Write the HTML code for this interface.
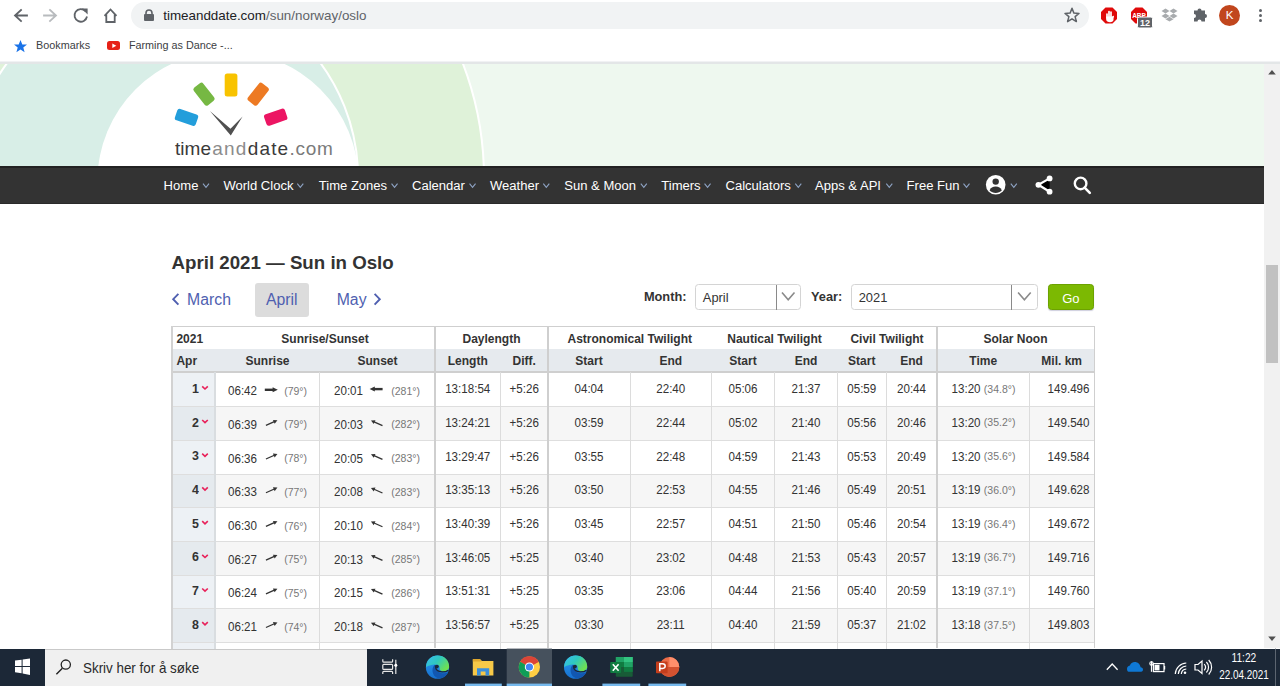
<!DOCTYPE html><html><head><meta charset="utf-8"><style>
*{margin:0;padding:0;box-sizing:border-box}
html,body{width:1280px;height:686px;overflow:hidden;background:#fff;position:relative;font-family:"Liberation Sans",sans-serif}
.t{position:absolute;white-space:pre;line-height:1;}
.r{position:absolute}
svg{position:absolute;overflow:visible}
</style></head><body>

<div class="r" style="left:0px;top:0px;width:1280px;height:62px;background:#ffffff;"></div>
<svg style="left:0;top:0" width="140" height="32"><g fill="none" stroke-width="1.8" stroke-linecap="square"><path d="M27 15.5H15.5M21 10L15 15.5L21 21" stroke="#5f6368"/><path d="M44 15.5H55.5M50 10L56 15.5L50 21" stroke="#b8bbbe"/></g><path d="M85.5 11.2A6.3 6.3 0 1 0 87 16.5" fill="none" stroke="#5f6368" stroke-width="1.8"/><path d="M81.6 8.6L87.6 8.6L87.6 14.6Z" fill="#5f6368"/><path d="M104.5 15.8L110.5 9.5L116.5 15.8M106.3 14.2V22H114.7V14.2" fill="none" stroke="#5f6368" stroke-width="1.8" stroke-linejoin="miter"/></svg>
<div class="r" style="left:131px;top:2px;width:958px;height:27px;background:#f1f3f4;border-radius:13.5px"></div>
<svg style="left:140;top:8px;left:140px" width="16" height="16"><path d="M6 6.5V5a3 3 0 0 1 6 0v1.5" fill="none" stroke="#5f6368" stroke-width="1.6"/><rect x="4" y="6" width="10" height="7" rx="1" fill="#5f6368"/></svg>
<div class="t" style="left:163.20px;top:8.80px;font-size:13.4px;color:#202124;font-weight:normal;">timeanddate.com</div>
<div class="t" style="left:265.99px;top:8.80px;font-size:13.4px;color:#5f6368">/sun/norway/oslo</div>
<svg style="left:1064px;top:7px" width="17" height="17"><path d="M8 1.3L9.9 6.1L15 6.4L11.1 9.6L12.4 14.6L8 11.8L3.6 14.6L4.9 9.6L1 6.4L6.1 6.1Z" fill="none" stroke="#5f6368" stroke-width="1.5" stroke-linejoin="round"/></svg>
<svg style="left:1100px;top:6px" width="19" height="19"><polygon points="5.5,1.5 12.5,1.5 17,6 17,13 12.5,17.5 5.5,17.5 1,13 1,6" fill="#e00a0a"/><g stroke="#fff" stroke-linecap="round" fill="none"><path d="M7 8V12M9 5.6V12M11 6V12" stroke-width="1.7"/><path d="M13.2 10.5L12.2 12.5" stroke-width="1.6"/></g><path d="M6.2 10.5H13.5V13.5C13.5 15.3 12 16.3 10 16.3C8 16.3 6.2 15.3 6.2 13.5Z" fill="#fff"/></svg>
<svg style="left:1130px;top:6px" width="24" height="24"><polygon points="5.5,1.5 12.5,1.5 17,6 17,13 12.5,17.5 5.5,17.5 1,13 1,6" fill="#e00a0a"/><text x="9" y="12.3" font-family="Liberation Sans" font-weight="bold" font-size="6.5" fill="#fff" text-anchor="middle">ABP</text><rect x="7.5" y="11" width="15" height="11" rx="1.5" fill="#5f6368" stroke="#fff" stroke-width="1"/><text x="15" y="20.3" font-family="Liberation Sans" font-weight="bold" font-size="9" fill="#fff" text-anchor="middle">12</text></svg>
<svg style="left:1161px;top:7px" width="18" height="17"><g fill="#a8abae"><path d="M4.5 1.5L8.5 4L4.5 6.5L0.5 4Z"/><path d="M12.5 1.5L16.5 4L12.5 6.5L8.5 4Z"/><path d="M4.5 6.5L8.5 9L4.5 11.5L0.5 9Z"/><path d="M12.5 6.5L16.5 9L12.5 11.5L8.5 9Z"/><path d="M4.5 12.2L8.5 9.8L12.5 12.2L8.5 14.6Z"/></g></svg>
<svg style="left:1191px;top:7px" width="18" height="17"><path d="M2 4.5H5.5A2 2 0 0 1 9.5 4.5H13V8A2 2 0 0 1 13 12V15.5H9.5A2 2 0 0 0 5.5 15.5H2V12A2 2 0 0 0 2 8Z" fill="#5f6368" transform="translate(1,-1)"/></svg>
<div class="r" style="left:1219px;top:4.5px;width:21px;height:21px;border-radius:50%;background:#c1461d"></div>
<div class="t" style="left:1225.66px;top:10.25px;font-size:11.5px;color:#fff;font-weight:normal;">K</div>
<div class="r" style="left:1258.5px;top:8.5px;width:3px;height:3px;border-radius:50%;background:#5f6368"></div>
<div class="r" style="left:1258.5px;top:13.5px;width:3px;height:3px;border-radius:50%;background:#5f6368"></div>
<div class="r" style="left:1258.5px;top:18.5px;width:3px;height:3px;border-radius:50%;background:#5f6368"></div>
<svg style="left:13px;top:39px" width="15" height="14"><path d="M7.5 1L9.3 5.5L14 5.6L10.3 8.6L11.6 13.2L7.5 10.5L3.4 13.2L4.7 8.6L1 5.6L5.7 5.5Z" fill="#1a73e8"/></svg>
<div class="t" style="left:36.10px;top:40.10px;font-size:10.8px;color:#3c4043;font-weight:normal;">Bookmarks</div>
<div class="r" style="left:106.5px;top:40.7px;width:13.6px;height:9.5px;border-radius:2.5px;background:#e62117"></div>
<svg style="left:106.5px;top:40.7px" width="14" height="10"><path d="M5.3 2.6L9.3 4.75L5.3 6.9Z" fill="#fff"/></svg>
<div class="t" style="left:128.90px;top:40.10px;font-size:10.8px;color:#3c4043;font-weight:normal;">Farming as Dance -...</div>
<svg style="left:0;top:63px" width="1264" height="103" viewBox="0 63 1264 103"><defs><clipPath id="hc"><rect x="0" y="63" width="1264" height="103"/></clipPath></defs><g clip-path="url(#hc)"><rect x="0" y="63" width="1264" height="103" fill="#eef8ef"/><circle cx="163" cy="178" r="321" fill="#dff2d9" stroke="#fff" stroke-width="2"/><circle cx="163.8" cy="178" r="194.3" fill="#d8eee7" stroke="#fff" stroke-width="2"/><circle cx="228" cy="181.6" r="130.6" fill="#fff"/></g><rect x="224.7" y="73.6" width="12.7" height="23" rx="2.5" fill="#f8c300"/><rect x="-6" y="-11.2" width="12" height="22.4" rx="2.5" fill="#76b843" transform="translate(204,94.2) rotate(-38)"/><rect x="-6" y="-11.2" width="12" height="22.4" rx="2.5" fill="#ed7a23" transform="translate(258.2,94.2) rotate(38)"/><rect x="-6" y="-11" width="12" height="22" rx="2.5" fill="#239edb" transform="translate(186.5,117.4) rotate(-71)"/><rect x="-6" y="-11" width="12" height="22" rx="2.5" fill="#ec1563" transform="translate(275.7,117.2) rotate(71)"/><path d="M209.9 110.9L230.8 135.5L242.6 116.5L230.5 128.8Z" fill="#505050"/></svg>
<div class="r" style="left:0px;top:61.2px;width:1280px;height:0.9px;background:#f1f2f4;"></div>
<div class="r" style="left:0px;top:62px;width:1280px;height:1.9px;background:#e3e6e7;"></div>
<div class="t" style="left:175.00px;top:138.70px;font-size:19px;color:#3a3a3a;font-weight:normal;letter-spacing:0.04px">time</div>
<div class="t" style="left:212.20px;top:138.70px;font-size:19px;color:#8c8c8c;font-weight:normal;letter-spacing:1.25px">and</div>
<div class="t" style="left:247.70px;top:138.70px;font-size:19px;color:#3a3a3a;font-weight:normal;letter-spacing:1.17px">date</div>
<div class="t" style="left:289.50px;top:138.70px;font-size:19px;color:#7a7a7a;font-weight:normal;letter-spacing:0.68px">.com</div>
<div class="r" style="left:0px;top:166.2px;width:1264px;height:37.3px;background:#333333;"></div>
<div class="r" style="left:0px;top:166.2px;width:1264px;height:1.6px;background:#222222;"></div>
<div class="r" style="left:0px;top:202.5px;width:1264px;height:1px;background:#2a2a2a;"></div>
<div class="t" style="left:163.60px;top:178.97px;font-size:13.05px;color:#ffffff;font-weight:normal;">Home</div>
<div class="t" style="left:223.40px;top:178.97px;font-size:13.05px;color:#ffffff;font-weight:normal;">World Clock</div>
<div class="t" style="left:318.75px;top:178.97px;font-size:13.05px;color:#ffffff;font-weight:normal;">Time Zones</div>
<div class="t" style="left:412.00px;top:178.97px;font-size:13.05px;color:#ffffff;font-weight:normal;">Calendar</div>
<div class="t" style="left:490.00px;top:178.97px;font-size:13.05px;color:#ffffff;font-weight:normal;">Weather</div>
<div class="t" style="left:564.25px;top:178.97px;font-size:13.05px;color:#ffffff;font-weight:normal;">Sun &amp; Moon</div>
<div class="t" style="left:661.25px;top:178.97px;font-size:13.05px;color:#ffffff;font-weight:normal;">Timers</div>
<div class="t" style="left:725.50px;top:178.97px;font-size:13.05px;color:#ffffff;font-weight:normal;">Calculators</div>
<div class="t" style="left:815.00px;top:178.97px;font-size:13.05px;color:#ffffff;font-weight:normal;">Apps &amp; API</div>
<div class="t" style="left:906.60px;top:178.97px;font-size:13.05px;color:#ffffff;font-weight:normal;">Free Fun</div>
<svg style="left:0;top:0" width="1280" height="686"><g fill="none" stroke="#8ea3c4" stroke-width="1.1"><path d="M203.00 183.7L206.00 187.3L209.00 183.7" /><path d="M297.30 183.7L300.30 187.3L303.30 183.7" /><path d="M391.55 183.7L394.55 187.3L397.55 183.7" /><path d="M469.55 183.7L472.55 187.3L475.55 183.7" /><path d="M543.30 183.7L546.30 187.3L549.30 183.7" /><path d="M640.80 183.7L643.80 187.3L646.80 183.7" /><path d="M704.55 183.7L707.55 187.3L710.55 183.7" /><path d="M795.30 183.7L798.30 187.3L801.30 183.7" /><path d="M886.30 183.7L889.30 187.3L892.30 183.7" /><path d="M963.50 183.7L966.50 187.3L969.50 183.7" /><path d="M1010.80 183.7L1013.80 187.3L1016.80 183.7" /></g><circle cx="995.7" cy="184.8" r="9.8" fill="#fff"/><circle cx="995.7" cy="181.6" r="3.2" fill="#333"/><path d="M989.6 190.6C990.6 187.6 992.8 186.6 995.7 186.6C998.6 186.6 1000.8 187.6 1001.8 190.6C1000.2 192.2 998 193 995.7 193C993.4 193 991.2 192.2 989.6 190.6Z" fill="#333"/><g stroke="#fff" stroke-width="2.2"><path d="M1049.6 178.4L1038.4 184.8L1049.6 191.7"/></g><g fill="#fff"><circle cx="1049.6" cy="178.4" r="2.9"/><circle cx="1038.4" cy="184.8" r="2.9"/><circle cx="1049.6" cy="191.7" r="2.9"/></g><circle cx="1080.6" cy="183.4" r="5.8" fill="none" stroke="#fff" stroke-width="2.4"/><path d="M1084.6 187.6L1089.8 192.8" stroke="#fff" stroke-width="2.6" stroke-linecap="round"/></svg>
<div class="t" style="left:171.50px;top:254.15px;font-size:18.7px;color:#333333;font-weight:bold;">April 2021 — Sun in Oslo</div>
<svg style="left:0;top:0" width="1280" height="686"><g fill="none" stroke="#4f5fb0" stroke-width="1.9"><path d="M178.4 293.8L173.2 299.2L178.4 304.6"/><path d="M374.6 293.8L379.8 299.2L374.6 304.6"/></g></svg>
<div class="t" style="left:187.10px;top:292.40px;font-size:15.8px;color:#4f5fb0;font-weight:normal;">March</div>
<div class="r" style="left:254.7px;top:282.7px;width:54.3px;height:34px;background:#dcdcdc;border-radius:3px"></div>
<div class="t" style="left:266.00px;top:292.40px;font-size:15.8px;color:#4f5fb0;font-weight:normal;">April</div>
<div class="t" style="left:336.70px;top:292.40px;font-size:15.8px;color:#4f5fb0;font-weight:normal;">May</div>
<div class="t" style="left:643.90px;top:290.60px;font-size:12.8px;color:#333;font-weight:bold;">Month:</div>
<div class="t" style="left:811.00px;top:290.60px;font-size:12.8px;color:#333;font-weight:bold;">Year:</div>
<div class="r" style="left:695.3px;top:284px;width:105.3px;height:26.4px;border:1px solid #d4d4d4;border-radius:3.5px;background:#fff"></div>
<div class="r" style="left:775.9px;top:285px;width:1px;height:24.6px;background:#8a8a8a;"></div>
<svg style="left:0;top:0" width="1280" height="686"><path d="M782.0 292.4L788.2 299.8L794.5 292.4" fill="none" stroke="#8a8a8a" stroke-width="1.6"/></svg>
<div class="t" style="left:702.80px;top:291.85px;font-size:12.9px;color:#333;font-weight:normal;">April</div>
<div class="r" style="left:851px;top:284px;width:186.8px;height:26.4px;border:1px solid #d4d4d4;border-radius:3.5px;background:#fff"></div>
<div class="r" style="left:1011px;top:285px;width:1px;height:24.6px;background:#8a8a8a;"></div>
<svg style="left:0;top:0" width="1280" height="686"><path d="M1018.1 292.4L1024.4 299.8L1030.7 292.4" fill="none" stroke="#8a8a8a" stroke-width="1.6"/></svg>
<div class="t" style="left:858.70px;top:291.85px;font-size:12.9px;color:#333;font-weight:normal;">2021</div>
<div class="r" style="left:1047.6px;top:284.2px;width:46px;height:26.2px;border-radius:3.5px;background:#7cb902;border:1px solid #6ca200;box-shadow:0 1px 1px rgba(60,60,120,.25)"></div>
<div class="t" style="left:1062.23px;top:292.00px;font-size:13px;color:#ffffff;font-weight:normal;">Go</div>
<div class="r" style="left:171.6px;top:326px;width:922.9px;height:23px;background:#ffffff;"></div>
<div class="r" style="left:171.6px;top:349px;width:922.9px;height:23px;background:#e6eaee;"></div>
<div class="r" style="left:171.6px;top:373.0px;width:922.9px;height:34.2px;background:#ffffff;"></div>
<div class="r" style="left:171.6px;top:373.0px;width:43.0px;height:34.2px;background:#edf1f5;"></div>
<div class="r" style="left:171.6px;top:406.7px;width:922.9px;height:34.2px;background:#f6f6f6;"></div>
<div class="r" style="left:171.6px;top:406.7px;width:43.0px;height:34.2px;background:#e5eaee;"></div>
<div class="r" style="left:171.6px;top:440.4px;width:922.9px;height:34.2px;background:#ffffff;"></div>
<div class="r" style="left:171.6px;top:440.4px;width:43.0px;height:34.2px;background:#edf1f5;"></div>
<div class="r" style="left:171.6px;top:474.1px;width:922.9px;height:34.2px;background:#f6f6f6;"></div>
<div class="r" style="left:171.6px;top:474.1px;width:43.0px;height:34.2px;background:#e5eaee;"></div>
<div class="r" style="left:171.6px;top:507.8px;width:922.9px;height:34.2px;background:#ffffff;"></div>
<div class="r" style="left:171.6px;top:507.8px;width:43.0px;height:34.2px;background:#edf1f5;"></div>
<div class="r" style="left:171.6px;top:541.5px;width:922.9px;height:34.2px;background:#f6f6f6;"></div>
<div class="r" style="left:171.6px;top:541.5px;width:43.0px;height:34.2px;background:#e5eaee;"></div>
<div class="r" style="left:171.6px;top:575.2px;width:922.9px;height:34.2px;background:#ffffff;"></div>
<div class="r" style="left:171.6px;top:575.2px;width:43.0px;height:34.2px;background:#edf1f5;"></div>
<div class="r" style="left:171.6px;top:608.9px;width:922.9px;height:34.2px;background:#f6f6f6;"></div>
<div class="r" style="left:171.6px;top:608.9px;width:43.0px;height:34.2px;background:#e5eaee;"></div>
<div class="r" style="left:171.6px;top:642.6px;width:922.9px;height:34.2px;background:#ffffff;"></div>
<div class="r" style="left:171.6px;top:642.6px;width:43.0px;height:34.2px;background:#edf1f5;"></div>
<div class="r" style="left:171.6px;top:406.2px;width:922.9px;height:1px;background:#dedede;"></div>
<div class="r" style="left:171.6px;top:439.9px;width:922.9px;height:1px;background:#dedede;"></div>
<div class="r" style="left:171.6px;top:473.6px;width:922.9px;height:1px;background:#dedede;"></div>
<div class="r" style="left:171.6px;top:507.3px;width:922.9px;height:1px;background:#dedede;"></div>
<div class="r" style="left:171.6px;top:541.0px;width:922.9px;height:1px;background:#dedede;"></div>
<div class="r" style="left:171.6px;top:574.7px;width:922.9px;height:1px;background:#dedede;"></div>
<div class="r" style="left:171.6px;top:608.4px;width:922.9px;height:1px;background:#dedede;"></div>
<div class="r" style="left:171.6px;top:642.1px;width:922.9px;height:1px;background:#dedede;"></div>
<div class="r" style="left:171.6px;top:325.6px;width:922.9px;height:1.2px;background:#cfcfcf;"></div>
<div class="r" style="left:171.6px;top:370.8px;width:922.9px;height:2px;background:#cfcfcf;"></div>
<div class="r" style="left:319.25px;top:372px;width:1.1px;height:276.5px;background:#dcdcdc;"></div>
<div class="r" style="left:500.0px;top:372px;width:1.1px;height:276.5px;background:#dcdcdc;"></div>
<div class="r" style="left:629.5px;top:372px;width:1.1px;height:276.5px;background:#dcdcdc;"></div>
<div class="r" style="left:711.0px;top:372px;width:1.1px;height:276.5px;background:#dcdcdc;"></div>
<div class="r" style="left:773.9px;top:372px;width:1.1px;height:276.5px;background:#dcdcdc;"></div>
<div class="r" style="left:837.0px;top:372px;width:1.1px;height:276.5px;background:#dcdcdc;"></div>
<div class="r" style="left:885.5px;top:372px;width:1.1px;height:276.5px;background:#dcdcdc;"></div>
<div class="r" style="left:1028.9px;top:372px;width:1.1px;height:276.5px;background:#dcdcdc;"></div>
<div class="r" style="left:214.1px;top:372px;width:1.8px;height:276.5px;background:#d9dde0;"></div>
<div class="r" style="left:433.75px;top:326px;width:2px;height:322px;background:#cfcfcf;"></div>
<div class="r" style="left:547px;top:326px;width:2px;height:322px;background:#cfcfcf;"></div>
<div class="r" style="left:935.9px;top:326px;width:2px;height:322px;background:#cfcfcf;"></div>
<div class="r" style="left:171.3px;top:326px;width:1.7px;height:322.5px;background:#d2d2d2;"></div>
<div class="r" style="left:1093.7px;top:326px;width:1.3px;height:322px;background:#cfcfcf;"></div>
<div class="t" style="left:176.40px;top:332.60px;font-size:12px;color:#333;font-weight:bold;">2021</div>
<div class="t" style="left:281.32px;top:332.60px;font-size:12px;color:#333;font-weight:bold;">Sunrise/Sunset</div>
<div class="t" style="left:462.50px;top:332.60px;font-size:12px;color:#333;font-weight:bold;">Daylength</div>
<div class="t" style="left:567.53px;top:332.60px;font-size:12px;color:#333;font-weight:bold;">Astronomical Twilight</div>
<div class="t" style="left:727.28px;top:332.60px;font-size:12px;color:#333;font-weight:bold;">Nautical Twilight</div>
<div class="t" style="left:850.45px;top:332.60px;font-size:12px;color:#333;font-weight:bold;">Civil Twilight</div>
<div class="t" style="left:983.50px;top:332.60px;font-size:12px;color:#333;font-weight:bold;">Solar Noon</div>
<div class="t" style="left:176.40px;top:354.60px;font-size:12px;color:#333;font-weight:bold;">Apr</div>
<div class="t" style="left:245.49px;top:354.60px;font-size:12px;color:#333;font-weight:bold;">Sunrise</div>
<div class="t" style="left:357.50px;top:354.60px;font-size:12px;color:#333;font-weight:bold;">Sunset</div>
<div class="t" style="left:447.75px;top:354.60px;font-size:12px;color:#333;font-weight:bold;">Length</div>
<div class="t" style="left:512.59px;top:354.60px;font-size:12px;color:#333;font-weight:bold;">Diff.</div>
<div class="t" style="left:575.33px;top:354.60px;font-size:12px;color:#333;font-weight:bold;">Start</div>
<div class="t" style="left:659.42px;top:354.60px;font-size:12px;color:#333;font-weight:bold;">End</div>
<div class="t" style="left:729.33px;top:354.60px;font-size:12px;color:#333;font-weight:bold;">Start</div>
<div class="t" style="left:794.67px;top:354.60px;font-size:12px;color:#333;font-weight:bold;">End</div>
<div class="t" style="left:848.08px;top:354.60px;font-size:12px;color:#333;font-weight:bold;">Start</div>
<div class="t" style="left:900.17px;top:354.60px;font-size:12px;color:#333;font-weight:bold;">End</div>
<div class="t" style="left:969.30px;top:354.60px;font-size:12px;color:#333;font-weight:bold;">Time</div>
<div class="t" style="left:1041.36px;top:354.60px;font-size:12px;color:#333;font-weight:bold;">Mil. km</div>
<div class="t" style="left:191.90px;top:382.80px;font-size:12.4px;color:#333;font-weight:bold;transform:scaleY(1.08);transform-origin:0 10.20px;">1</div>
<div class="t" style="left:228.00px;top:385.20px;font-size:11.6px;color:#333;font-weight:normal;transform:scaleY(1.17);transform-origin:0 9.80px;">06:42</div>
<div class="t" style="left:284.20px;top:385.75px;font-size:10.5px;color:#777;font-weight:normal;">(79°)</div>
<div class="t" style="left:334.00px;top:385.20px;font-size:11.6px;color:#333;font-weight:normal;transform:scaleY(1.17);transform-origin:0 9.80px;">20:01</div>
<div class="t" style="left:391.25px;top:385.75px;font-size:10.5px;color:#777;font-weight:normal;">(281°)</div>
<div class="t" style="left:445.17px;top:383.20px;font-size:11.6px;color:#333;font-weight:normal;transform:scaleY(1.17);transform-origin:0 9.80px;">13:18:54</div>
<div class="t" style="left:509.57px;top:383.20px;font-size:11.6px;color:#333;font-weight:normal;transform:scaleY(1.17);transform-origin:0 9.80px;">+5:26</div>
<div class="t" style="left:574.49px;top:383.20px;font-size:11.6px;color:#333;font-weight:normal;transform:scaleY(1.17);transform-origin:0 9.80px;">04:04</div>
<div class="t" style="left:656.24px;top:383.20px;font-size:11.6px;color:#333;font-weight:normal;transform:scaleY(1.17);transform-origin:0 9.80px;">22:40</div>
<div class="t" style="left:728.49px;top:383.20px;font-size:11.6px;color:#333;font-weight:normal;transform:scaleY(1.17);transform-origin:0 9.80px;">05:06</div>
<div class="t" style="left:791.49px;top:383.20px;font-size:11.6px;color:#333;font-weight:normal;transform:scaleY(1.17);transform-origin:0 9.80px;">21:37</div>
<div class="t" style="left:847.24px;top:383.20px;font-size:11.6px;color:#333;font-weight:normal;transform:scaleY(1.17);transform-origin:0 9.80px;">05:59</div>
<div class="t" style="left:896.99px;top:383.20px;font-size:11.6px;color:#333;font-weight:normal;transform:scaleY(1.17);transform-origin:0 9.80px;">20:44</div>
<div class="t" style="left:951.56px;top:383.20px;font-size:11.6px;color:#333;font-weight:normal;transform:scaleY(1.17);transform-origin:0 9.80px;">13:20</div>
<div class="t" style="left:983.81px;top:383.75px;font-size:10.5px;color:#777;font-weight:normal;">(34.8°)</div>
<div class="t" style="left:1047.57px;top:383.20px;font-size:11.6px;color:#333;font-weight:normal;transform:scaleY(1.17);transform-origin:0 9.80px;">149.496</div>
<div class="t" style="left:191.90px;top:416.50px;font-size:12.4px;color:#333;font-weight:bold;transform:scaleY(1.08);transform-origin:0 10.20px;">2</div>
<div class="t" style="left:228.00px;top:418.90px;font-size:11.6px;color:#333;font-weight:normal;transform:scaleY(1.17);transform-origin:0 9.80px;">06:39</div>
<div class="t" style="left:284.20px;top:419.45px;font-size:10.5px;color:#777;font-weight:normal;">(79°)</div>
<div class="t" style="left:334.00px;top:418.90px;font-size:11.6px;color:#333;font-weight:normal;transform:scaleY(1.17);transform-origin:0 9.80px;">20:03</div>
<div class="t" style="left:391.25px;top:419.45px;font-size:10.5px;color:#777;font-weight:normal;">(282°)</div>
<div class="t" style="left:445.17px;top:416.90px;font-size:11.6px;color:#333;font-weight:normal;transform:scaleY(1.17);transform-origin:0 9.80px;">13:24:21</div>
<div class="t" style="left:509.57px;top:416.90px;font-size:11.6px;color:#333;font-weight:normal;transform:scaleY(1.17);transform-origin:0 9.80px;">+5:26</div>
<div class="t" style="left:574.49px;top:416.90px;font-size:11.6px;color:#333;font-weight:normal;transform:scaleY(1.17);transform-origin:0 9.80px;">03:59</div>
<div class="t" style="left:656.24px;top:416.90px;font-size:11.6px;color:#333;font-weight:normal;transform:scaleY(1.17);transform-origin:0 9.80px;">22:44</div>
<div class="t" style="left:728.49px;top:416.90px;font-size:11.6px;color:#333;font-weight:normal;transform:scaleY(1.17);transform-origin:0 9.80px;">05:02</div>
<div class="t" style="left:791.49px;top:416.90px;font-size:11.6px;color:#333;font-weight:normal;transform:scaleY(1.17);transform-origin:0 9.80px;">21:40</div>
<div class="t" style="left:847.24px;top:416.90px;font-size:11.6px;color:#333;font-weight:normal;transform:scaleY(1.17);transform-origin:0 9.80px;">05:56</div>
<div class="t" style="left:896.99px;top:416.90px;font-size:11.6px;color:#333;font-weight:normal;transform:scaleY(1.17);transform-origin:0 9.80px;">20:46</div>
<div class="t" style="left:951.56px;top:416.90px;font-size:11.6px;color:#333;font-weight:normal;transform:scaleY(1.17);transform-origin:0 9.80px;">13:20</div>
<div class="t" style="left:983.81px;top:417.45px;font-size:10.5px;color:#777;font-weight:normal;">(35.2°)</div>
<div class="t" style="left:1047.57px;top:416.90px;font-size:11.6px;color:#333;font-weight:normal;transform:scaleY(1.17);transform-origin:0 9.80px;">149.540</div>
<div class="t" style="left:191.90px;top:450.20px;font-size:12.4px;color:#333;font-weight:bold;transform:scaleY(1.08);transform-origin:0 10.20px;">3</div>
<div class="t" style="left:228.00px;top:452.60px;font-size:11.6px;color:#333;font-weight:normal;transform:scaleY(1.17);transform-origin:0 9.80px;">06:36</div>
<div class="t" style="left:284.20px;top:453.15px;font-size:10.5px;color:#777;font-weight:normal;">(78°)</div>
<div class="t" style="left:334.00px;top:452.60px;font-size:11.6px;color:#333;font-weight:normal;transform:scaleY(1.17);transform-origin:0 9.80px;">20:05</div>
<div class="t" style="left:391.25px;top:453.15px;font-size:10.5px;color:#777;font-weight:normal;">(283°)</div>
<div class="t" style="left:445.17px;top:450.60px;font-size:11.6px;color:#333;font-weight:normal;transform:scaleY(1.17);transform-origin:0 9.80px;">13:29:47</div>
<div class="t" style="left:509.57px;top:450.60px;font-size:11.6px;color:#333;font-weight:normal;transform:scaleY(1.17);transform-origin:0 9.80px;">+5:26</div>
<div class="t" style="left:574.49px;top:450.60px;font-size:11.6px;color:#333;font-weight:normal;transform:scaleY(1.17);transform-origin:0 9.80px;">03:55</div>
<div class="t" style="left:656.24px;top:450.60px;font-size:11.6px;color:#333;font-weight:normal;transform:scaleY(1.17);transform-origin:0 9.80px;">22:48</div>
<div class="t" style="left:728.49px;top:450.60px;font-size:11.6px;color:#333;font-weight:normal;transform:scaleY(1.17);transform-origin:0 9.80px;">04:59</div>
<div class="t" style="left:791.49px;top:450.60px;font-size:11.6px;color:#333;font-weight:normal;transform:scaleY(1.17);transform-origin:0 9.80px;">21:43</div>
<div class="t" style="left:847.24px;top:450.60px;font-size:11.6px;color:#333;font-weight:normal;transform:scaleY(1.17);transform-origin:0 9.80px;">05:53</div>
<div class="t" style="left:896.99px;top:450.60px;font-size:11.6px;color:#333;font-weight:normal;transform:scaleY(1.17);transform-origin:0 9.80px;">20:49</div>
<div class="t" style="left:951.56px;top:450.60px;font-size:11.6px;color:#333;font-weight:normal;transform:scaleY(1.17);transform-origin:0 9.80px;">13:20</div>
<div class="t" style="left:983.81px;top:451.15px;font-size:10.5px;color:#777;font-weight:normal;">(35.6°)</div>
<div class="t" style="left:1047.57px;top:450.60px;font-size:11.6px;color:#333;font-weight:normal;transform:scaleY(1.17);transform-origin:0 9.80px;">149.584</div>
<div class="t" style="left:191.90px;top:483.90px;font-size:12.4px;color:#333;font-weight:bold;transform:scaleY(1.08);transform-origin:0 10.20px;">4</div>
<div class="t" style="left:228.00px;top:486.30px;font-size:11.6px;color:#333;font-weight:normal;transform:scaleY(1.17);transform-origin:0 9.80px;">06:33</div>
<div class="t" style="left:284.20px;top:486.85px;font-size:10.5px;color:#777;font-weight:normal;">(77°)</div>
<div class="t" style="left:334.00px;top:486.30px;font-size:11.6px;color:#333;font-weight:normal;transform:scaleY(1.17);transform-origin:0 9.80px;">20:08</div>
<div class="t" style="left:391.25px;top:486.85px;font-size:10.5px;color:#777;font-weight:normal;">(283°)</div>
<div class="t" style="left:445.17px;top:484.30px;font-size:11.6px;color:#333;font-weight:normal;transform:scaleY(1.17);transform-origin:0 9.80px;">13:35:13</div>
<div class="t" style="left:509.57px;top:484.30px;font-size:11.6px;color:#333;font-weight:normal;transform:scaleY(1.17);transform-origin:0 9.80px;">+5:26</div>
<div class="t" style="left:574.49px;top:484.30px;font-size:11.6px;color:#333;font-weight:normal;transform:scaleY(1.17);transform-origin:0 9.80px;">03:50</div>
<div class="t" style="left:656.24px;top:484.30px;font-size:11.6px;color:#333;font-weight:normal;transform:scaleY(1.17);transform-origin:0 9.80px;">22:53</div>
<div class="t" style="left:728.49px;top:484.30px;font-size:11.6px;color:#333;font-weight:normal;transform:scaleY(1.17);transform-origin:0 9.80px;">04:55</div>
<div class="t" style="left:791.49px;top:484.30px;font-size:11.6px;color:#333;font-weight:normal;transform:scaleY(1.17);transform-origin:0 9.80px;">21:46</div>
<div class="t" style="left:847.24px;top:484.30px;font-size:11.6px;color:#333;font-weight:normal;transform:scaleY(1.17);transform-origin:0 9.80px;">05:49</div>
<div class="t" style="left:896.99px;top:484.30px;font-size:11.6px;color:#333;font-weight:normal;transform:scaleY(1.17);transform-origin:0 9.80px;">20:51</div>
<div class="t" style="left:951.56px;top:484.30px;font-size:11.6px;color:#333;font-weight:normal;transform:scaleY(1.17);transform-origin:0 9.80px;">13:19</div>
<div class="t" style="left:983.81px;top:484.85px;font-size:10.5px;color:#777;font-weight:normal;">(36.0°)</div>
<div class="t" style="left:1047.57px;top:484.30px;font-size:11.6px;color:#333;font-weight:normal;transform:scaleY(1.17);transform-origin:0 9.80px;">149.628</div>
<div class="t" style="left:191.90px;top:517.60px;font-size:12.4px;color:#333;font-weight:bold;transform:scaleY(1.08);transform-origin:0 10.20px;">5</div>
<div class="t" style="left:228.00px;top:520.00px;font-size:11.6px;color:#333;font-weight:normal;transform:scaleY(1.17);transform-origin:0 9.80px;">06:30</div>
<div class="t" style="left:284.20px;top:520.55px;font-size:10.5px;color:#777;font-weight:normal;">(76°)</div>
<div class="t" style="left:334.00px;top:520.00px;font-size:11.6px;color:#333;font-weight:normal;transform:scaleY(1.17);transform-origin:0 9.80px;">20:10</div>
<div class="t" style="left:391.25px;top:520.55px;font-size:10.5px;color:#777;font-weight:normal;">(284°)</div>
<div class="t" style="left:445.17px;top:518.00px;font-size:11.6px;color:#333;font-weight:normal;transform:scaleY(1.17);transform-origin:0 9.80px;">13:40:39</div>
<div class="t" style="left:509.57px;top:518.00px;font-size:11.6px;color:#333;font-weight:normal;transform:scaleY(1.17);transform-origin:0 9.80px;">+5:26</div>
<div class="t" style="left:574.49px;top:518.00px;font-size:11.6px;color:#333;font-weight:normal;transform:scaleY(1.17);transform-origin:0 9.80px;">03:45</div>
<div class="t" style="left:656.24px;top:518.00px;font-size:11.6px;color:#333;font-weight:normal;transform:scaleY(1.17);transform-origin:0 9.80px;">22:57</div>
<div class="t" style="left:728.49px;top:518.00px;font-size:11.6px;color:#333;font-weight:normal;transform:scaleY(1.17);transform-origin:0 9.80px;">04:51</div>
<div class="t" style="left:791.49px;top:518.00px;font-size:11.6px;color:#333;font-weight:normal;transform:scaleY(1.17);transform-origin:0 9.80px;">21:50</div>
<div class="t" style="left:847.24px;top:518.00px;font-size:11.6px;color:#333;font-weight:normal;transform:scaleY(1.17);transform-origin:0 9.80px;">05:46</div>
<div class="t" style="left:896.99px;top:518.00px;font-size:11.6px;color:#333;font-weight:normal;transform:scaleY(1.17);transform-origin:0 9.80px;">20:54</div>
<div class="t" style="left:951.56px;top:518.00px;font-size:11.6px;color:#333;font-weight:normal;transform:scaleY(1.17);transform-origin:0 9.80px;">13:19</div>
<div class="t" style="left:983.81px;top:518.55px;font-size:10.5px;color:#777;font-weight:normal;">(36.4°)</div>
<div class="t" style="left:1047.57px;top:518.00px;font-size:11.6px;color:#333;font-weight:normal;transform:scaleY(1.17);transform-origin:0 9.80px;">149.672</div>
<div class="t" style="left:191.90px;top:551.30px;font-size:12.4px;color:#333;font-weight:bold;transform:scaleY(1.08);transform-origin:0 10.20px;">6</div>
<div class="t" style="left:228.00px;top:553.70px;font-size:11.6px;color:#333;font-weight:normal;transform:scaleY(1.17);transform-origin:0 9.80px;">06:27</div>
<div class="t" style="left:284.20px;top:554.25px;font-size:10.5px;color:#777;font-weight:normal;">(75°)</div>
<div class="t" style="left:334.00px;top:553.70px;font-size:11.6px;color:#333;font-weight:normal;transform:scaleY(1.17);transform-origin:0 9.80px;">20:13</div>
<div class="t" style="left:391.25px;top:554.25px;font-size:10.5px;color:#777;font-weight:normal;">(285°)</div>
<div class="t" style="left:445.17px;top:551.70px;font-size:11.6px;color:#333;font-weight:normal;transform:scaleY(1.17);transform-origin:0 9.80px;">13:46:05</div>
<div class="t" style="left:509.57px;top:551.70px;font-size:11.6px;color:#333;font-weight:normal;transform:scaleY(1.17);transform-origin:0 9.80px;">+5:25</div>
<div class="t" style="left:574.49px;top:551.70px;font-size:11.6px;color:#333;font-weight:normal;transform:scaleY(1.17);transform-origin:0 9.80px;">03:40</div>
<div class="t" style="left:656.24px;top:551.70px;font-size:11.6px;color:#333;font-weight:normal;transform:scaleY(1.17);transform-origin:0 9.80px;">23:02</div>
<div class="t" style="left:728.49px;top:551.70px;font-size:11.6px;color:#333;font-weight:normal;transform:scaleY(1.17);transform-origin:0 9.80px;">04:48</div>
<div class="t" style="left:791.49px;top:551.70px;font-size:11.6px;color:#333;font-weight:normal;transform:scaleY(1.17);transform-origin:0 9.80px;">21:53</div>
<div class="t" style="left:847.24px;top:551.70px;font-size:11.6px;color:#333;font-weight:normal;transform:scaleY(1.17);transform-origin:0 9.80px;">05:43</div>
<div class="t" style="left:896.99px;top:551.70px;font-size:11.6px;color:#333;font-weight:normal;transform:scaleY(1.17);transform-origin:0 9.80px;">20:57</div>
<div class="t" style="left:951.56px;top:551.70px;font-size:11.6px;color:#333;font-weight:normal;transform:scaleY(1.17);transform-origin:0 9.80px;">13:19</div>
<div class="t" style="left:983.81px;top:552.25px;font-size:10.5px;color:#777;font-weight:normal;">(36.7°)</div>
<div class="t" style="left:1047.57px;top:551.70px;font-size:11.6px;color:#333;font-weight:normal;transform:scaleY(1.17);transform-origin:0 9.80px;">149.716</div>
<div class="t" style="left:191.90px;top:585.00px;font-size:12.4px;color:#333;font-weight:bold;transform:scaleY(1.08);transform-origin:0 10.20px;">7</div>
<div class="t" style="left:228.00px;top:587.40px;font-size:11.6px;color:#333;font-weight:normal;transform:scaleY(1.17);transform-origin:0 9.80px;">06:24</div>
<div class="t" style="left:284.20px;top:587.95px;font-size:10.5px;color:#777;font-weight:normal;">(75°)</div>
<div class="t" style="left:334.00px;top:587.40px;font-size:11.6px;color:#333;font-weight:normal;transform:scaleY(1.17);transform-origin:0 9.80px;">20:15</div>
<div class="t" style="left:391.25px;top:587.95px;font-size:10.5px;color:#777;font-weight:normal;">(286°)</div>
<div class="t" style="left:445.17px;top:585.40px;font-size:11.6px;color:#333;font-weight:normal;transform:scaleY(1.17);transform-origin:0 9.80px;">13:51:31</div>
<div class="t" style="left:509.57px;top:585.40px;font-size:11.6px;color:#333;font-weight:normal;transform:scaleY(1.17);transform-origin:0 9.80px;">+5:25</div>
<div class="t" style="left:574.49px;top:585.40px;font-size:11.6px;color:#333;font-weight:normal;transform:scaleY(1.17);transform-origin:0 9.80px;">03:35</div>
<div class="t" style="left:656.24px;top:585.40px;font-size:11.6px;color:#333;font-weight:normal;transform:scaleY(1.17);transform-origin:0 9.80px;">23:06</div>
<div class="t" style="left:728.49px;top:585.40px;font-size:11.6px;color:#333;font-weight:normal;transform:scaleY(1.17);transform-origin:0 9.80px;">04:44</div>
<div class="t" style="left:791.49px;top:585.40px;font-size:11.6px;color:#333;font-weight:normal;transform:scaleY(1.17);transform-origin:0 9.80px;">21:56</div>
<div class="t" style="left:847.24px;top:585.40px;font-size:11.6px;color:#333;font-weight:normal;transform:scaleY(1.17);transform-origin:0 9.80px;">05:40</div>
<div class="t" style="left:896.99px;top:585.40px;font-size:11.6px;color:#333;font-weight:normal;transform:scaleY(1.17);transform-origin:0 9.80px;">20:59</div>
<div class="t" style="left:951.56px;top:585.40px;font-size:11.6px;color:#333;font-weight:normal;transform:scaleY(1.17);transform-origin:0 9.80px;">13:19</div>
<div class="t" style="left:983.81px;top:585.95px;font-size:10.5px;color:#777;font-weight:normal;">(37.1°)</div>
<div class="t" style="left:1047.57px;top:585.40px;font-size:11.6px;color:#333;font-weight:normal;transform:scaleY(1.17);transform-origin:0 9.80px;">149.760</div>
<div class="t" style="left:191.90px;top:618.70px;font-size:12.4px;color:#333;font-weight:bold;transform:scaleY(1.08);transform-origin:0 10.20px;">8</div>
<div class="t" style="left:228.00px;top:621.10px;font-size:11.6px;color:#333;font-weight:normal;transform:scaleY(1.17);transform-origin:0 9.80px;">06:21</div>
<div class="t" style="left:284.20px;top:621.65px;font-size:10.5px;color:#777;font-weight:normal;">(74°)</div>
<div class="t" style="left:334.00px;top:621.10px;font-size:11.6px;color:#333;font-weight:normal;transform:scaleY(1.17);transform-origin:0 9.80px;">20:18</div>
<div class="t" style="left:391.25px;top:621.65px;font-size:10.5px;color:#777;font-weight:normal;">(287°)</div>
<div class="t" style="left:445.17px;top:619.10px;font-size:11.6px;color:#333;font-weight:normal;transform:scaleY(1.17);transform-origin:0 9.80px;">13:56:57</div>
<div class="t" style="left:509.57px;top:619.10px;font-size:11.6px;color:#333;font-weight:normal;transform:scaleY(1.17);transform-origin:0 9.80px;">+5:25</div>
<div class="t" style="left:574.49px;top:619.10px;font-size:11.6px;color:#333;font-weight:normal;transform:scaleY(1.17);transform-origin:0 9.80px;">03:30</div>
<div class="t" style="left:656.67px;top:619.10px;font-size:11.6px;color:#333;font-weight:normal;transform:scaleY(1.17);transform-origin:0 9.80px;">23:11</div>
<div class="t" style="left:728.49px;top:619.10px;font-size:11.6px;color:#333;font-weight:normal;transform:scaleY(1.17);transform-origin:0 9.80px;">04:40</div>
<div class="t" style="left:791.49px;top:619.10px;font-size:11.6px;color:#333;font-weight:normal;transform:scaleY(1.17);transform-origin:0 9.80px;">21:59</div>
<div class="t" style="left:847.24px;top:619.10px;font-size:11.6px;color:#333;font-weight:normal;transform:scaleY(1.17);transform-origin:0 9.80px;">05:37</div>
<div class="t" style="left:896.99px;top:619.10px;font-size:11.6px;color:#333;font-weight:normal;transform:scaleY(1.17);transform-origin:0 9.80px;">21:02</div>
<div class="t" style="left:951.56px;top:619.10px;font-size:11.6px;color:#333;font-weight:normal;transform:scaleY(1.17);transform-origin:0 9.80px;">13:18</div>
<div class="t" style="left:983.81px;top:619.65px;font-size:10.5px;color:#777;font-weight:normal;">(37.5°)</div>
<div class="t" style="left:1047.57px;top:619.10px;font-size:11.6px;color:#333;font-weight:normal;transform:scaleY(1.17);transform-origin:0 9.80px;">149.803</div>
<div class="t" style="left:191.90px;top:652.40px;font-size:12.4px;color:#333;font-weight:bold;transform:scaleY(1.08);transform-origin:0 10.20px;">9</div>
<div class="t" style="left:228.00px;top:654.80px;font-size:11.6px;color:#333;font-weight:normal;transform:scaleY(1.17);transform-origin:0 9.80px;">06:18</div>
<div class="t" style="left:284.20px;top:655.35px;font-size:10.5px;color:#777;font-weight:normal;">(73°)</div>
<div class="t" style="left:334.00px;top:654.80px;font-size:11.6px;color:#333;font-weight:normal;transform:scaleY(1.17);transform-origin:0 9.80px;">20:20</div>
<div class="t" style="left:391.25px;top:655.35px;font-size:10.5px;color:#777;font-weight:normal;">(288°)</div>
<div class="t" style="left:445.17px;top:652.80px;font-size:11.6px;color:#333;font-weight:normal;transform:scaleY(1.17);transform-origin:0 9.80px;">14:02:23</div>
<div class="t" style="left:509.57px;top:652.80px;font-size:11.6px;color:#333;font-weight:normal;transform:scaleY(1.17);transform-origin:0 9.80px;">+5:25</div>
<div class="t" style="left:574.49px;top:652.80px;font-size:11.6px;color:#333;font-weight:normal;transform:scaleY(1.17);transform-origin:0 9.80px;">03:25</div>
<div class="t" style="left:656.24px;top:652.80px;font-size:11.6px;color:#333;font-weight:normal;transform:scaleY(1.17);transform-origin:0 9.80px;">23:15</div>
<div class="t" style="left:728.49px;top:652.80px;font-size:11.6px;color:#333;font-weight:normal;transform:scaleY(1.17);transform-origin:0 9.80px;">04:36</div>
<div class="t" style="left:791.49px;top:652.80px;font-size:11.6px;color:#333;font-weight:normal;transform:scaleY(1.17);transform-origin:0 9.80px;">22:02</div>
<div class="t" style="left:847.24px;top:652.80px;font-size:11.6px;color:#333;font-weight:normal;transform:scaleY(1.17);transform-origin:0 9.80px;">05:34</div>
<div class="t" style="left:896.99px;top:652.80px;font-size:11.6px;color:#333;font-weight:normal;transform:scaleY(1.17);transform-origin:0 9.80px;">21:05</div>
<div class="t" style="left:951.56px;top:652.80px;font-size:11.6px;color:#333;font-weight:normal;transform:scaleY(1.17);transform-origin:0 9.80px;">13:18</div>
<div class="t" style="left:983.81px;top:653.35px;font-size:10.5px;color:#777;font-weight:normal;">(37.9°)</div>
<div class="t" style="left:1047.57px;top:652.80px;font-size:11.6px;color:#333;font-weight:normal;transform:scaleY(1.17);transform-origin:0 9.80px;">149.846</div>
<svg style="left:0;top:0" width="1280" height="686"><path d="M202.2 386.30L205 389.00L207.8 386.30" fill="none" stroke="#e8215a" stroke-width="1.6"/><path d="M264.8 389.80H273.5" stroke="#333" stroke-width="2.4"/><path d="M272.6 387.30L277.8 389.80L272.6 392.30Z" fill="#333"/><path d="M382.6 389.10H373.9" stroke="#333" stroke-width="2.4"/><path d="M374.8 386.60L369.6 389.10L374.8 391.60Z" fill="#333"/><path d="M202.2 420.00L205 422.70L207.8 420.00" fill="none" stroke="#e8215a" stroke-width="1.6"/><g transform="translate(271.6,422.80) rotate(-24)"><path d="M-6.2 0H3" stroke="#333" stroke-width="1.3"/><path d="M2.4 -2.1L6.4 0L2.4 2.1Z" fill="#333"/></g><g transform="translate(376.8,423.10) rotate(24)"><path d="M6.2 0H-3" stroke="#333" stroke-width="1.3"/><path d="M-2.4 -2.1L-6.4 0L-2.4 2.1Z" fill="#333"/></g><path d="M202.2 453.70L205 456.40L207.8 453.70" fill="none" stroke="#e8215a" stroke-width="1.6"/><g transform="translate(271.6,456.50) rotate(-24)"><path d="M-6.2 0H3" stroke="#333" stroke-width="1.3"/><path d="M2.4 -2.1L6.4 0L2.4 2.1Z" fill="#333"/></g><g transform="translate(376.8,456.80) rotate(24)"><path d="M6.2 0H-3" stroke="#333" stroke-width="1.3"/><path d="M-2.4 -2.1L-6.4 0L-2.4 2.1Z" fill="#333"/></g><path d="M202.2 487.40L205 490.10L207.8 487.40" fill="none" stroke="#e8215a" stroke-width="1.6"/><g transform="translate(271.6,490.20) rotate(-24)"><path d="M-6.2 0H3" stroke="#333" stroke-width="1.3"/><path d="M2.4 -2.1L6.4 0L2.4 2.1Z" fill="#333"/></g><g transform="translate(376.8,490.50) rotate(24)"><path d="M6.2 0H-3" stroke="#333" stroke-width="1.3"/><path d="M-2.4 -2.1L-6.4 0L-2.4 2.1Z" fill="#333"/></g><path d="M202.2 521.10L205 523.80L207.8 521.10" fill="none" stroke="#e8215a" stroke-width="1.6"/><g transform="translate(271.6,523.90) rotate(-24)"><path d="M-6.2 0H3" stroke="#333" stroke-width="1.3"/><path d="M2.4 -2.1L6.4 0L2.4 2.1Z" fill="#333"/></g><g transform="translate(376.8,524.20) rotate(24)"><path d="M6.2 0H-3" stroke="#333" stroke-width="1.3"/><path d="M-2.4 -2.1L-6.4 0L-2.4 2.1Z" fill="#333"/></g><path d="M202.2 554.80L205 557.50L207.8 554.80" fill="none" stroke="#e8215a" stroke-width="1.6"/><g transform="translate(271.6,557.60) rotate(-24)"><path d="M-6.2 0H3" stroke="#333" stroke-width="1.3"/><path d="M2.4 -2.1L6.4 0L2.4 2.1Z" fill="#333"/></g><g transform="translate(376.8,557.90) rotate(24)"><path d="M6.2 0H-3" stroke="#333" stroke-width="1.3"/><path d="M-2.4 -2.1L-6.4 0L-2.4 2.1Z" fill="#333"/></g><path d="M202.2 588.50L205 591.20L207.8 588.50" fill="none" stroke="#e8215a" stroke-width="1.6"/><g transform="translate(271.6,591.30) rotate(-24)"><path d="M-6.2 0H3" stroke="#333" stroke-width="1.3"/><path d="M2.4 -2.1L6.4 0L2.4 2.1Z" fill="#333"/></g><g transform="translate(376.8,591.60) rotate(24)"><path d="M6.2 0H-3" stroke="#333" stroke-width="1.3"/><path d="M-2.4 -2.1L-6.4 0L-2.4 2.1Z" fill="#333"/></g><path d="M202.2 622.20L205 624.90L207.8 622.20" fill="none" stroke="#e8215a" stroke-width="1.6"/><g transform="translate(271.6,625.00) rotate(-24)"><path d="M-6.2 0H3" stroke="#333" stroke-width="1.3"/><path d="M2.4 -2.1L6.4 0L2.4 2.1Z" fill="#333"/></g><g transform="translate(376.8,625.30) rotate(24)"><path d="M6.2 0H-3" stroke="#333" stroke-width="1.3"/><path d="M-2.4 -2.1L-6.4 0L-2.4 2.1Z" fill="#333"/></g><path d="M202.2 655.90L205 658.60L207.8 655.90" fill="none" stroke="#e8215a" stroke-width="1.6"/><g transform="translate(271.6,658.70) rotate(-24)"><path d="M-6.2 0H3" stroke="#333" stroke-width="1.3"/><path d="M2.4 -2.1L6.4 0L2.4 2.1Z" fill="#333"/></g><g transform="translate(376.8,659.00) rotate(24)"><path d="M6.2 0H-3" stroke="#333" stroke-width="1.3"/><path d="M-2.4 -2.1L-6.4 0L-2.4 2.1Z" fill="#333"/></g></svg>
<div class="r" style="left:1264px;top:63.9px;width:16px;height:584.1px;background:#f1f1f1;"></div>
<div class="r" style="left:1265.8px;top:265px;width:12.5px;height:97.8px;background:#c1c1c1;"></div>
<svg style="left:1264px;top:63px" width="16" height="585"><path d="M4.2 11.4L8 7L11.8 11.4Z" fill="#505050"/><path d="M4.2 573.6L8 578L11.8 573.6Z" fill="#505050"/></svg>
<div class="r" style="left:0px;top:648.6px;width:1280px;height:37.4px;background:#1c2837;"></div>
<div class="r" style="left:45px;top:648.6px;width:322.4px;height:37.4px;background:#f0f0f0;"></div>
<div class="r" style="left:45px;top:648.6px;width:322.4px;height:1.2px;background:#c9c9c9;"></div>
<svg style="left:0;top:648px" width="1280" height="38"><path d="M15 12.6L21.6 11.7V17.9H15Z M22.6 11.5L30 10.5V17.9H22.6Z M15 18.9H21.6V25.2L15 24.2Z M22.6 18.9H30V27L22.6 25.4Z" fill="#fff"/><circle cx="65.8" cy="16.6" r="4.6" fill="none" stroke="#222" stroke-width="1.3"/><path d="M62.4 20.2L56.4 26.3" stroke="#222" stroke-width="1.4"/><g fill="none" stroke="#e6e6e6" stroke-width="1.2"><path d="M382.8 11.3V13.2Q382.8 14.2 383.8 14.2H391.6Q392.6 14.2 392.6 13.2V11.3"/><rect x="382.8" y="16.4" width="9.8" height="5" rx="0.9"/><path d="M382.8 26V24.2Q382.8 23.3 383.8 23.3H391.6Q392.6 23.3 392.6 24.2V26"/><path d="M395.8 11.8V26"/></g><circle cx="395.8" cy="17.2" r="1.5" fill="#fff"/><defs><linearGradient id="eg" x1="0" y1="0" x2="1" y2="0.6"><stop offset="0" stop-color="#3cbcf2"/><stop offset=".5" stop-color="#2ec8c0"/><stop offset="1" stop-color="#6ee052"/></linearGradient><linearGradient id="eb" x1="0" y1="0" x2="0" y2="1"><stop offset="0" stop-color="#2a9cf0"/><stop offset="1" stop-color="#1670d0"/></linearGradient></defs><g id="edge1"><circle cx="437.5" cy="19.2" r="11.6" fill="url(#eb)"/><path d="M426 19C426.5 11.5 431.5 7.6 437.5 7.6C444.5 7.6 449.1 12.5 449.1 18.5C449.1 21.8 446.5 23.2 443.5 23.2C440.8 23.2 439.2 21.8 439.6 19.7C439.9 17.8 438.5 16.4 436.2 16.4C431.5 16.4 427.5 18 426 19Z" fill="url(#eg)"/><path d="M434.2 17.2C431.2 21 432.2 27.5 437 29.8C441.5 31.5 446 29 448 24.6C445.5 25.6 441 25.8 438.4 23.8C436.3 22.2 435.6 19.6 436 17.2Z" fill="#1257b0"/><path d="M435.3 17.6C435.4 21.4 438 23.9 442.2 23.9C445 23.9 447.2 23.2 448.4 22.2" fill="none" stroke="#1c2837" stroke-width="1.2"/><circle cx="437" cy="18.6" r="1.8" fill="#1c2837"/></g><use href="#edge1" x="138.1"/><path d="M472.8 11.5H480.5L482 13H493.4V27.4H472.8Z" fill="#f7c948"/><path d="M472.8 11H480L481.5 13.5H472.8Z" fill="#e0a82e"/><path d="M477 27.4V20.2H489.2V27.4H485.5V23.5H480.7V27.4Z" fill="#3b8fdc"/><rect x="506.7" y="0.6" width="45.3" height="37.4" fill="#46515d"/><circle cx="529.4" cy="19" r="10.6" fill="#ffce44"/><path d="M529.4 19L520.2 13.7A10.6 10.6 0 0 1 538.6 13.7Z" fill="#db4437"/><path d="M529.4 19L538.6 13.7 L520.2 13.7Z" fill="#db4437"/><path d="M529.4 19L520.2 13.7A10.6 10.6 0 0 0 529.4 29.6Z" fill="#0f9d58"/><circle cx="529.4" cy="19" r="4.6" fill="#fff"/><circle cx="529.4" cy="19" r="3.6" fill="#4285f4"/><rect x="615.8" y="9" width="16.9" height="19.8" rx="0.8" fill="#185c37"/><rect x="615.8" y="9" width="16.9" height="5" fill="#21a366"/><rect x="624" y="9" width="8.7" height="5" fill="#33c481"/><rect x="615.8" y="14" width="16.9" height="5" fill="#107c41"/><rect x="624" y="14" width="8.7" height="5" fill="#21a366"/><rect x="615.8" y="19" width="16.9" height="4.9" fill="#185c37"/><rect x="624" y="19" width="8.7" height="4.9" fill="#107c41"/><rect x="610.2" y="14" width="10.9" height="10.9" rx="0.8" fill="#107c41"/><path d="M612.8 16.3L618.6 22.8M618.6 16.3L612.8 22.8" stroke="#fff" stroke-width="1.6"/><circle cx="669.4" cy="19" r="9.9" fill="#ed6c47"/><path d="M669.4 9.1A9.9 9.9 0 0 1 679.3 19H669.4Z" fill="#ff8f6b"/><path d="M669.4 19H679.3A9.9 9.9 0 0 1 659.5 19Z" fill="#d35230"/><rect x="656" y="13.6" width="11.6" height="11.6" rx="0.8" fill="#c43e1c"/><path d="M659.8 23.2V15.8H662.6C664.4 15.8 665.2 16.8 665.2 18.1C665.2 19.4 664.4 20.4 662.6 20.4H659.8" fill="none" stroke="#fff" stroke-width="1.5"/><g fill="#76b9ed"><rect x="465" y="35.6" width="36.8" height="2.4"/><rect x="506.7" y="35.6" width="45.3" height="2.4"/><rect x="602.4" y="35.6" width="37.8" height="2.4"/><rect x="648.4" y="35.6" width="37.8" height="2.4"/></g><path d="M1106.8 21.8L1112.2 16L1117.6 21.8" fill="none" stroke="#fff" stroke-width="1.3"/><path d="M1128.5 23.8H1141C1142.6 23.8 1143 22.5 1143 21.6C1143 20.2 1142 19.3 1140.6 19.3C1140.2 16.2 1137.8 14 1134.8 14C1132.4 14 1130.6 15.5 1129.9 17.5C1128 17.8 1127 19.4 1127 21C1127 22.6 1127.8 23.8 1128.5 23.8Z" fill="#0f78d4"/><g fill="none" stroke="#fff" stroke-width="1.2"><rect x="1153.4" y="15.6" width="10.6" height="8"/><path d="M1164.6 18V21.4"/><path d="M1151.5 13.2V23.8"/></g><rect x="1154.5" y="16.8" width="5" height="5.6" fill="#fff"/><circle cx="1151.5" cy="15.5" r="1.7" fill="none" stroke="#fff" stroke-width="1.1"/><g fill="none" stroke="#fff" stroke-width="1.2"><path d="M1175.3 26A11.5 11.5 0 0 1 1186.3 15"/><path d="M1178.3 26A8.5 8.5 0 0 1 1186.3 18"/><path d="M1181.3 26A5.5 5.5 0 0 1 1186.3 21"/></g><circle cx="1185" cy="24.8" r="1.3" fill="#fff"/><g fill="none" stroke="#fff" stroke-width="1.2"><path d="M1195 16.5H1198L1202 13V25.5L1198 22H1195Z"/><path d="M1204.2 16.2A4.5 4.5 0 0 1 1204.2 22.3"/><path d="M1206.4 14A7.5 7.5 0 0 1 1206.4 24.5"/><path d="M1208.7 12A10.5 10.5 0 0 1 1208.7 26.5"/></g><rect x="1275" y="0.6" width="1" height="37.4" fill="#5c6570"/></svg>
<div class="t" style="left:83.00px;top:662.20px;font-size:13.4px;color:#2a2a2a;font-weight:normal;transform:scaleY(1.1);transform-origin:0 11.4px;">Skriv her for å søke</div>
<div class="t" style="left:1231.50px;top:654.20px;font-size:10.2px;color:#ffffff;font-weight:normal;transform:scaleY(1.2);transform-origin:0 8.7px;">11:22</div>
<div class="t" style="left:1219.30px;top:671.15px;font-size:9.9px;color:#ffffff;font-weight:normal;transform:scaleY(1.22);transform-origin:0 8.4px;">22.04.2021</div>
</body></html>
